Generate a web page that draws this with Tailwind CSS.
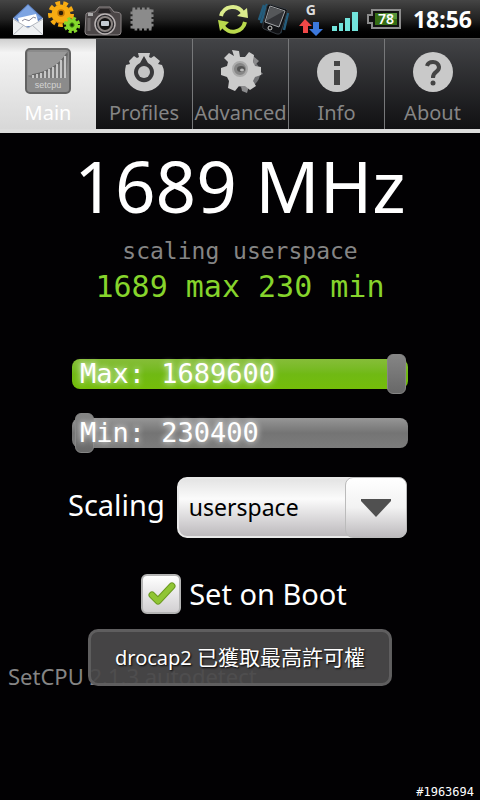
<!DOCTYPE html>
<html lang="en">
<head>
    <meta charset="UTF-8">
    <meta name="viewport" content="width=device-width, initial-scale=1.0">
    <title>SetCPU</title>
    <script src="https://cdn.jsdelivr.net/npm/@tailwindcss/browser@4"></script>
</head>
<body class="relative flex min-h-screen flex-col overflow-x-hidden bg-[#020103] font-['Noto_Sans','Noto_Sans_CJK_TC',sans-serif] text-white">
    <!-- Status bar -->
    <header class="flex h-[38px] items-center justify-between bg-linear-to-b from-[#454545] via-[#222] via-50% to-black pr-2 pl-3">
        <div class="flex items-center gap-1">
            <svg class="h-9 w-8" viewBox="0 0 32 36" aria-label="Mail">
                <path d="M1 17 16 3 31 17V34H1Z" fill="#5f83c4" />
                <path d="M3 17 16 4 29 17 16 20Z" fill="#7da4e2" />
                <path d="M6 17 24 13 27 24 8 26Z" fill="#fff" />
                <path d="M10 20q3-3 5-1t4-1 5-1" fill="none" stroke="#889" stroke-width="1" />
                <path d="M1 17 16 27 31 17V34H1Z" fill="#eef0f2" />
                <path d="M1 34 12 24M31 34 20 24M1 18 16 27 31 18" fill="none" stroke="#b5b9c0" stroke-width="1" />
            </svg>
            <svg class="h-9 w-8" viewBox="0 0 32 36" aria-label="Settings">
                <circle cx="13" cy="13" r="9.5" fill="#f7ac12" />
                <circle cx="13" cy="13" r="11" fill="none" stroke="#f7ac12" stroke-width="4" stroke-dasharray="4.6 3.08" />
                <path d="M5 17Q9 23 17 21Q11 26 5 17Z" fill="#d87d08" />
                <circle cx="13" cy="12" r="3" fill="#2a1d08" stroke="#c47808" stroke-width="1.5" />
                <circle cx="24" cy="24" r="6" fill="#86d82c" />
                <circle cx="24" cy="24" r="6.5" fill="none" stroke="#86d82c" stroke-width="3.5" stroke-dasharray="3 2.1" />
                <circle cx="24" cy="24" r="2.2" fill="#173008" stroke="#4c9a12" />
            </svg>
            <svg class="h-9 w-[38px]" viewBox="0 0 38 36" aria-label="Camera">
                <path d="M2 13q1-2 9-2l4-5h11l4 5q7 0 7 3v17q0 3-3 3H4q-3 0-3-3Z" fill="#4b4647" stroke="#8d8788" stroke-width="1" />
                <path d="M16 8h9l2 4H14Z" fill="#262324" />
                <path d="M4 12h5v3H4Z" fill="#aaa" />
                <circle cx="21" cy="23" r="10" fill="#29282b" stroke="#b9b3b3" stroke-width="1.5" />
                <circle cx="21" cy="23" r="7" fill="#111" stroke="#8b8482" stroke-width="2" />
                <rect x="17" y="20" width="8" height="5" rx="1" fill="#c3cbd2" />
                <path d="M5 17v13" stroke="#6d6869" stroke-width="3" />
            </svg>
            <svg class="ml-1 h-9 w-6" viewBox="0 0 24 36" aria-label="Processor">
                <rect x="2.5" y="8.5" width="19" height="19" fill="#858585" stroke="#858585" stroke-width="4" stroke-dasharray="2.7 2.05" />
                <rect x="3" y="9" width="18" height="18" fill="#8b8b8b" />
            </svg>
        </div>
        <div class="flex items-center gap-2">
            <svg class="h-9 w-8" viewBox="0 0 32 36" aria-label="Sync">
                <g fill="none" stroke="#b9d94c" stroke-width="4">
                    <path d="M4 15A12 12 0 0 1 26 12" stroke="#dcec8c" />
                    <path d="M28 21A12 12 0 0 1 6 25" />
                </g>
                <path d="M20 15 31 17 30 7Z" fill="#dcec8c" />
                <path d="M1 19 12 21 3 30Z" fill="#b9d94c" />
            </svg>
            <svg class="h-9 w-[34px]" viewBox="0 0 34 36" aria-label="Vibrate">
                <path d="M7 4 2 19M10 3 4 22M27 15 23 32M31 12 27 29" stroke="#245d7d" stroke-width="2.5" />
                <path d="M12 3 29 8Q31 9 30 11L24 31Q23 34 20 33L7 28Q5 27 6 24L10 5Q11 3 12 3Z" fill="#101114" stroke="#353a40" />
                <path d="M13 5 28 10 22 26 8 21Z" fill="#333438" stroke="#a2a5a8" />
                <path d="M13 6 27 10 9 20Z" fill="#55575a" />
                <circle cx="13" cy="27" r="2" fill="#111" stroke="#ccc" />
            </svg>
            <div class="flex w-6 flex-col items-center" role="img" aria-label="Mobile data">
                <span class="text-sm leading-4 font-bold text-[#ddd]">G</span>
                <svg class="h-[18px] w-6" viewBox="0 0 24 18">
                    <path d="M6 1 13 8H9V15H4V8H0Z" fill="#f04848" />
                    <path d="M17 18 10 11H14V4H20V11H24Z" fill="#3c78dc" />
                </svg>
            </div>
            <svg class="h-9 w-7" viewBox="0 0 28 36" aria-label="Signal">
                <path d="M1 25h5v5H1ZM8 22h4v8H8ZM14 17h5v13H14ZM21 11h6v19H21Z" fill="#72e4dc" />
            </svg>
            <div class="relative flex h-5 w-[34px] items-center justify-center">
                <svg class="absolute inset-0 h-5 w-[34px]" viewBox="0 0 34 20" aria-label="Battery">
                    <path d="M5 1H33V19H5V14H1V6H5Z" fill="#111" stroke="#8c8c8c" stroke-width="2" />
                    <path d="M8 4H30V16H8Z" fill="#356e14" />
                    <path d="M16 4H30V10H16Z" fill="#56943a" />
                </svg>
                <span class="relative pl-1 text-sm font-semibold">78</span>
            </div>
            <time class="pl-1 text-[23px] leading-8 font-bold">18:56</time>
        </div>
    </header>

    <!-- Tabs -->
    <nav class="grid h-[95px] grid-cols-5 border-t border-b-4 border-t-[#555] border-b-[#dcdcdc] bg-linear-to-b from-[#434447] to-[#111113] text-xl leading-6 text-[#858585]">
        <a href="#main" class="flex flex-col items-center bg-linear-to-b from-[#d0d0d0] via-[#f4f4f4] via-15% to-[#d8d8d8] pt-2 text-white">
            <svg class="h-[50px] w-12" viewBox="0 0 48 50" aria-hidden="true">
                <rect x="2" y="2" width="44" height="44" rx="4" fill="#8b8b8b" stroke="#626262" stroke-width="2" />
                <path d="M4 29Q31 25 41 6L44 5V8L42 31H8Z" fill="#777" />
                <path d="M4 5H43Q31 25 7 28H4Z" fill="#999" />
                <path d="M8 28Q32 24 43 7" fill="none" stroke="#666" stroke-width="1.5" />
                <path d="M9 28v3M13 27v4M17 26v5M21 24v7M25 22v9M29 20v11M33 17v14M37 13v18M41 9v22" stroke="#c6c6c6" stroke-width="2" />
                <text x="24" y="41" text-anchor="middle" font-size="9" fill="#d4d4d4" font-family="Liberation Sans, sans-serif">setcpu</text>
            </svg>
            <span class="pt-1">Main</span>
        </a>
        <a href="#profiles" class="flex flex-col items-center pt-2">
            <svg class="h-[50px] w-12" viewBox="0 0 48 50" aria-hidden="true">
                <path d="M6 18 10 17 9 14 14 9 17 11 19 10 18 6H30L29 10 31 11 34 9 40 14 38 17 42 18Q44 22 44 25A19.500 19.500 0 0 1 5 25Q5 22 6 18Z" fill="#cacaca" />
                <path d="M24 9 28 16A10 10 0 1 1 20 16Z" fill="#38383a" />
                <circle cx="24" cy="25" r="6" fill="#c4c4c4" />
            </svg>
            <span class="pt-1">Profiles</span>
        </a>
        <a href="#advanced" class="flex flex-col items-center border-l border-[#77787a] pt-2">
            <svg class="h-[50px] w-12" viewBox="0 0 48 50" aria-hidden="true">
                <!-- back gear -->
                <circle cx="28" cy="26" r="15" fill="#707174" />
                <path d="M24 39 32 39 30 46 25 44ZM36 9 42 14 37 19ZM42 23 46 27 40 29Z" fill="#8b8b8d" />
                <!-- front gear -->
                <path d="M15 3 22 4 23 10 28 10 32 5 37 8 36 15 38 19 44 20V28L38 30 36 34 39 39 33 43 28 39 22 39 18 44 11 41 12 34 10 30 4 28V21L10 19 11 15 7 11 12 6 17 9Z" fill="#cbcbcb" />
                <circle cx="23" cy="22" r="7" fill="#858585" stroke="#aaa" stroke-width="2" />
                <ellipse cx="24" cy="22" rx="4" ry="3" fill="#555" />
                <ellipse cx="25" cy="23" rx="2" ry="1.500" fill="#bbb" />
            </svg>
            <span class="pt-1">Advanced</span>
        </a>
        <a href="#info" class="flex flex-col items-center border-l border-[#77787a] pt-2">
            <svg class="h-[50px] w-12" viewBox="0 0 48 50" aria-hidden="true">
                <circle cx="24" cy="25" r="20" fill="#c9c9c9" />
                <path d="M21 14H27V19H21ZM21 23H27V38H21Z" fill="#444" />
            </svg>
            <span class="pt-1">Info</span>
        </a>
        <a href="#about" class="flex flex-col items-center border-l border-[#77787a] pt-2">
            <svg class="h-[50px] w-12" viewBox="0 0 48 50" aria-hidden="true">
                <circle cx="24" cy="25" r="20" fill="#c9c9c9" />
                <path d="M18 19Q19 15 24 15T30 20Q30 23 27 25T24 31" fill="none" stroke="#444" stroke-width="4" />
                <circle cx="24" cy="36" r="2.5" fill="#444" />
            </svg>
            <span class="pt-1">About</span>
        </a>
    </nav>

    <!-- Clock speed -->
    <main class="flex flex-col">
        <h1 class="pt-2 text-center text-[71px] leading-[90px]">1689 MHz</h1>
        <p class="pt-1 text-center font-['DejaVu_Sans_Mono',monospace] text-[23px] leading-8 text-[#858585]">scaling userspace</p>
        <p class="text-center font-['DejaVu_Sans_Mono',monospace] text-[30px] leading-10 text-[#86d42c]">1689 max 230 min</p>

        <div class="flex flex-col gap-[19px] px-[72px] pt-[47px] font-['DejaVu_Sans_Mono',monospace] text-[27px] leading-10">
            <div class="relative h-10">
                <input id="max" type="range" min="216000" max="1700000" step="100" value="1689600" class="block h-10 w-full appearance-none bg-transparent [&::-webkit-slider-runnable-track]:h-[30px] [&::-webkit-slider-runnable-track]:rounded-lg [&::-webkit-slider-runnable-track]:bg-linear-to-b [&::-webkit-slider-runnable-track]:from-[#86bd38] [&::-webkit-slider-runnable-track]:via-[#70b914] [&::-webkit-slider-runnable-track]:to-[#74bd09] [&::-webkit-slider-thumb]:-mt-[5px] [&::-webkit-slider-thumb]:h-10 [&::-webkit-slider-thumb]:w-[19px] [&::-webkit-slider-thumb]:appearance-none [&::-webkit-slider-thumb]:rounded-md [&::-webkit-slider-thumb]:border [&::-webkit-slider-thumb]:border-[#858585] [&::-webkit-slider-thumb]:bg-linear-to-b [&::-webkit-slider-thumb]:from-[#858585] [&::-webkit-slider-thumb]:to-[#686868]">
                <label for="max" class="pointer-events-none absolute inset-y-0 left-2 [text-shadow:0_0_6px_#fff]">Max: 1689600</label>
            </div>
            <div class="relative h-10">
                <input id="min" type="range" min="216000" max="1700000" step="100" value="230400" class="block h-10 w-full appearance-none bg-transparent [&::-webkit-slider-runnable-track]:h-[30px] [&::-webkit-slider-runnable-track]:rounded-lg [&::-webkit-slider-runnable-track]:bg-linear-to-b [&::-webkit-slider-runnable-track]:from-[#969696] [&::-webkit-slider-runnable-track]:via-[#747474] [&::-webkit-slider-runnable-track]:to-[#7c7c7c] [&::-webkit-slider-thumb]:-mt-[5px] [&::-webkit-slider-thumb]:h-10 [&::-webkit-slider-thumb]:w-[19px] [&::-webkit-slider-thumb]:appearance-none [&::-webkit-slider-thumb]:rounded-md [&::-webkit-slider-thumb]:border [&::-webkit-slider-thumb]:border-[#858585] [&::-webkit-slider-thumb]:bg-linear-to-b [&::-webkit-slider-thumb]:from-[#858585] [&::-webkit-slider-thumb]:to-[#686868]">
                <label for="min" class="pointer-events-none absolute inset-y-0 left-2 [text-shadow:0_0_6px_#fff]">Min: 230400</label>
            </div>
        </div>

        <div class="flex items-start gap-3 pt-6 pr-[73px] pl-[68px]">
            <label for="scaling" class="pt-2 text-[29px] leading-10">Scaling</label>
            <div class="relative h-[61px] flex-1">
                <select id="scaling" class="h-full w-full appearance-none rounded-[10px] border-2 border-[#e8e8e8] bg-linear-to-b from-[#e4e4e4] via-[#fbfbfb] via-35% to-[#bdbabd] pl-2.5 text-[23px] text-black">
                    <option>userspace</option>
                    <option>ondemand</option>
                    <option>performance</option>
                </select>
                <span class="pointer-events-none absolute inset-y-0 right-0 flex w-[62px] items-center justify-center rounded-lg border border-[#bbb] bg-linear-to-b from-white via-[#f2f2f2] to-[#bdbabd]">
                    <svg class="h-5 w-8" viewBox="0 0 32 20" aria-hidden="true"><path d="M1 1H31V3L16 19 1 3Z" fill="#505050" /></svg>
                </span>
            </div>
        </div>

        <label class="flex items-center justify-center gap-2 pt-9 pl-2 text-[29px] leading-10">
            <span class="relative size-10">
                <input type="checkbox" checked class="block size-10 appearance-none rounded-md border-2 border-[#b4b4b4] bg-linear-to-b from-white to-[#d2d0d2]">
                <svg class="pointer-events-none absolute inset-0 size-10" viewBox="0 0 40 40" aria-hidden="true">
                    <path d="M11 21 17 27 31 12" fill="none" stroke="#6c9a20" stroke-width="7" stroke-linecap="round" stroke-linejoin="round" />
                    <path d="M11 21 17 27 31 12" fill="none" stroke="#90c534" stroke-width="5" stroke-linecap="round" stroke-linejoin="round" />
                </svg>
            </span>
            Set on Boot
        </label>

        <p class="px-2 pt-12 text-[22px] leading-7 text-[#858585]">SetCPU 2.1.3 autodetect</p>
    </main>

    <footer class="mt-auto pr-1.5 text-right font-['DejaVu_Sans_Mono',monospace] text-xs leading-4">#1963694</footer>

    <!-- Toast -->
    <div role="status" class="absolute bottom-[114px] left-1/2 flex h-[57px] -translate-x-1/2 items-center rounded-[10px] border-3 border-[#626262]/90 bg-[#4a494a]/93 px-6 text-xl whitespace-nowrap [text-shadow:1px_1px_2px_#000]">
        drocap2&nbsp;<span lang="zh-Hant" class="text-[21px]">已獲取最高許可權</span>
    </div>
</body>
</html>
